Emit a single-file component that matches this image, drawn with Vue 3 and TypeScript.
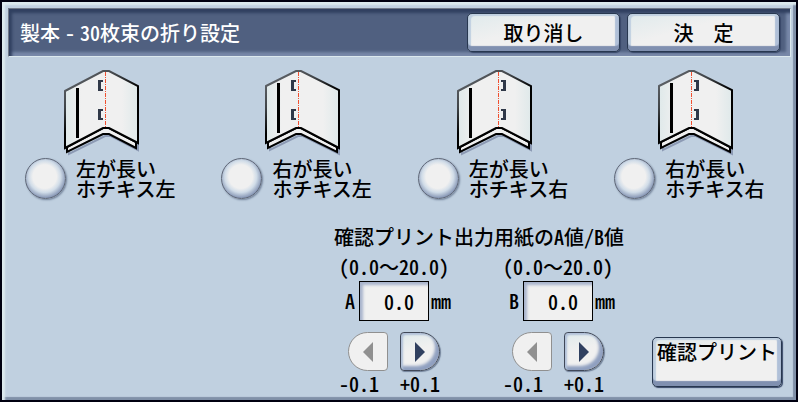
<script setup lang="ts">
import { reactive, ref } from 'vue'

type Side = 'left' | 'right'

interface FoldOption {
  id: string
  longSide: Side
  stapleSide: Side
  text: string
}

interface Adjustment {
  name: string
  value: number
}

const options: FoldOption[] = [
  { id: 'll', longSide: 'left', stapleSide: 'left', text: '左が長い\nホチキス左' },
  { id: 'rl', longSide: 'right', stapleSide: 'left', text: '右が長い\nホチキス左' },
  { id: 'lr', longSide: 'left', stapleSide: 'right', text: '左が長い\nホチキス右' },
  { id: 'rr', longSide: 'right', stapleSide: 'right', text: '右が長い\nホチキス右' },
]

const selected = ref<string>('')
const adjustments = reactive<Adjustment[]>([
  { name: 'A', value: 0 },
  { name: 'B', value: 0 },
])

const shapes = {
  left: {
    page: 'M1 23 L39 3 H45 L74 18 V75 L45 60 H39 L1 80 Z',
    edge: 'M3 79 V84 L39 66 H45 L72 80 V74 L45 60 H39 Z',
    bar: { x: 12, y: 20 },
    fold: 41.5,
    staple: { left: 34, right: 49 },
  },
  right: {
    page: 'M6 18 L36 3 H41 L79 22 V80 L41 60 H36 L6 75 Z',
    edge: 'M8 74 V80 L36 66 H41 L77 84 V79 L41 60 H36 Z',
    bar: { x: 17, y: 15 },
    fold: 38.5,
    staple: { left: 31, right: 46 },
  },
}

function staplePath(o: FoldOption, y: number): string {
  const x = shapes[o.longSide].staple[o.stapleSide]
  const s = o.stapleSide === 'left' ? 1 : -1
  return `M${x} ${y} h${5 * s} v2 h${-2 * s} v7 h${2 * s} v2 h${-5 * s} Z`
}

function step(a: Adjustment, delta: number): void {
  a.value = Math.min(20, Math.max(0, Math.round((a.value + delta) * 10) / 10))
}
</script>

<template>
  <main class="panel">
    <header class="bar">
      <h1 class="title">製本<span class="dash">-</span>30枚束の折り設定</h1>
      <button type="button" class="btn">取り消し</button>
      <button type="button" class="btn wide">決　定</button>
    </header>

    <div class="options" role="radiogroup">
      <label v-for="o in options" :key="o.id" class="option">
        <svg class="booklet" viewBox="0 0 80 88" aria-hidden="true">
          <defs>
            <linearGradient :id="'pg-' + o.id" x1="0" x2="1" y1="0" y2="0">
              <stop offset="0" stop-color="#dfe9ea" />
              <stop offset="0.22" stop-color="#f0f0f0" />
              <stop offset="0.78" stop-color="#f0f0f0" />
              <stop offset="1" stop-color="#dfe9ea" />
            </linearGradient>
            <linearGradient :id="'ln-' + o.id" x1="0" x2="0.6" y1="0" y2="1">
              <stop offset="0" stop-color="#6c7076" />
              <stop offset="0.35" stop-color="#404448" />
              <stop offset="0.6" stop-color="#000" />
            </linearGradient>
          </defs>
          <path :d="shapes[o.longSide].edge" class="shade" />
          <path :d="shapes[o.longSide].edge" class="edge" />
          <path
            :d="shapes[o.longSide].page"
            :fill="`url(#pg-${o.id})`"
            :stroke="`url(#ln-${o.id})`"
            stroke-width="2"
          />
          <rect :x="shapes[o.longSide].bar.x" :y="shapes[o.longSide].bar.y" width="3" height="50" />
          <path :d="staplePath(o, 12)" class="staple" />
          <path :d="staplePath(o, 41)" class="staple" />
          <path :d="`M${shapes[o.longSide].fold} 4 V59`" class="fold" />
        </svg>
        <span class="choice">
          <input v-model="selected" type="radio" name="fold" class="radio" :value="o.id" />
          <span class="choice-text">{{ o.text }}</span>
        </span>
      </label>
    </div>

    <div class="lower">
      <fieldset class="adjust">
        <legend class="legend">確認プリント出力用紙のA値/B値</legend>
        <div class="columns">
          <div v-for="a in adjustments" :key="a.name" class="column">
            <div class="range">(0.0<span class="wide">〜</span>20.0)</div>
            <div class="field">
              <label :for="'value-' + a.name" class="name">{{ a.name }}</label>
              <input :id="'value-' + a.name" class="value" type="text" readonly :value="a.value.toFixed(1)" />
              <span>mm</span>
            </div>
            <div class="steppers">
              <div class="stepper">
                <button
                  :id="'dec-' + a.name"
                  type="button"
                  class="arrow dec"
                  :disabled="a.value <= 0"
                  @click="step(a, -0.1)"
                >
                  <svg width="10" height="20" viewBox="0 0 10 20" aria-hidden="true">
                    <path d="M10 0 V20 L0 10 Z" fill="currentColor" />
                  </svg>
                </button>
                <label :for="'dec-' + a.name">-0.1</label>
              </div>
              <div class="stepper">
                <button
                  :id="'inc-' + a.name"
                  type="button"
                  class="arrow inc"
                  :disabled="a.value >= 20"
                  @click="step(a, 0.1)"
                >
                  <svg width="10" height="20" viewBox="0 0 10 20" aria-hidden="true">
                    <path d="M0 0 V20 L10 10 Z" fill="currentColor" />
                  </svg>
                </button>
                <label :for="'inc-' + a.name">+0.1</label>
              </div>
            </div>
          </div>
        </div>
      </fieldset>
      <button type="button" class="btn print">確認プリント</button>
    </div>
  </main>
</template>

<style>
body {
  background: #000010;
}
</style>

<style scoped>
.panel,
.panel * {
  box-sizing: border-box;
}
.panel {
  display: flex;
  flex-direction: column;
  min-height: 100vh;
  padding: 4px 3px 2px 4px;
  border: 2px solid #000010;
  background: #c0d0e0;
  box-shadow: inset 3px 3px 2px #dce9ee, inset -3px -3px 1px #8090a8;
  color: #000;
  font-family: "Noto Sans CJK JP", sans-serif;
  font-feature-settings: "hwid";
  font-size: 20px;
  font-weight: 500;
  line-height: 20px;
}
button,
input {
  font: inherit;
  font-feature-settings: inherit;
  color: inherit;
}
.bar {
  display: flex;
  align-items: center;
  gap: 7px;
  height: 49px;
  margin: 2px 2px 3px;
  padding: 0 10px 0 11px;
  border: 1px solid #dce9ee;
  border-top-color: #707888;
  border-left-color: #707888;
  background: #506080;
  box-shadow: inset 3px 4px 3px #304060, inset -4px -4px 3px #7888a8;
}
.title {
  flex: 1;
  margin: 0;
  color: #fff;
  font: inherit;
}
.dash {
  padding: 0 5px;
}
.btn {
  width: 153px;
  height: 39px;
  padding: 0;
  border: 1px solid #283850;
  border-radius: 5px;
  background: linear-gradient(165deg, #dfeaec 0, #f0f0f0 40%);
  box-shadow: inset 0 -5px 1px #8090b0, inset 3px 2px 1px #c0d0e0, inset -4px 0 1px #b0c0d8, 1px 1px 1px #384868;
  white-space: nowrap;
}
.wide {
  font-feature-settings: normal;
}
.options {
  display: grid;
  grid-template-columns: repeat(4, 1fr);
  gap: 46px;
  padding: 8px 30px 0 19px;
}
.option {
  display: flex;
  flex-direction: column;
  gap: 2px;
}
.booklet {
  width: 80px;
  height: 88px;
  margin-left: 39px;
}
.edge {
  fill: #f0f0f0;
  stroke: #000;
  stroke-width: 2;
}
.shade {
  fill: none;
  stroke: #8c9ab4;
  stroke-width: 2;
  transform: translate(2px, 2px);
}
.staple {
  fill: #303848;
}
.fold {
  stroke: #f05030;
  stroke-width: 1;
  stroke-dasharray: 4 1 1 1;
}
.choice {
  display: flex;
  align-items: center;
  gap: 10px;
}
.choice-text {
  white-space: pre;
}
.radio {
  appearance: none;
  flex: none;
  width: 41px;
  height: 41px;
  margin: 0;
  border: 1px solid #606878;
  border-radius: 50%;
  background: radial-gradient(circle at 48% 45%, #f0f0f0 0, #f0f0f0 40%, #d0dce8 54%, #8090b0 74%);
  box-shadow: 1px 1px 2px #708098;
}
.radio:checked {
  background: radial-gradient(circle, #506080 0, #506080 30%, #f0f0f0 36%, #90a0c0 72%);
}
.lower {
  display: flex;
  flex: 1;
  align-items: flex-end;
  justify-content: flex-end;
  gap: 28px;
  padding: 0 11px 4px 0;
}
.adjust {
  min-width: 0;
  margin: 0;
  padding: 0;
  border: 0;
}
.legend {
  padding: 0;
  margin-bottom: 10px;
}
.columns {
  display: flex;
  gap: 50px;
  padding-left: 5px;
}
.column {
  width: 114px;
}
.range {
  white-space: nowrap;
}
.field {
  display: flex;
  align-items: center;
  gap: 2px;
  margin: 4px 0 11px 6px;
}
.name {
  width: 12px;
}
.value {
  width: 70px;
  height: 40px;
  padding: 0 14px 0 0;
  border: 1px solid #000;
  border-radius: 0;
  background: #f0f0f0;
  box-shadow: inset 3px 3px 3px #a8b4cc;
  text-align: right;
  outline: 0;
}
.steppers {
  display: flex;
  gap: 12px;
}
.stepper {
  display: flex;
  flex-direction: column;
  align-items: flex-start;
  gap: 3px;
  width: 49px;
}
.arrow {
  display: flex;
  align-items: center;
  justify-content: center;
  width: 40px;
  height: 39px;
  padding: 0;
  border: 1px solid #404858;
  background: linear-gradient(165deg, #dfeaec 0, #f0f0f0 45%);
  box-shadow: inset 2px 2px 2px #b0c0d8, inset -4px -4px 3px #90a0c0, 1px 1px 1px #708098;
  color: #304060;
}
.arrow:disabled {
  border-color: #909090;
  background: #f0f0f0;
  box-shadow: none;
  color: #909090;
}
.dec {
  align-self: flex-end;
  border-radius: 20px 4px 4px 20px;
}
.inc {
  border-radius: 4px 20px 20px 4px;
}
.print {
  display: flex;
  justify-content: center;
  width: 130px;
  height: 50px;
  margin-bottom: 7px;
  padding-top: 4px;
}
</style>
